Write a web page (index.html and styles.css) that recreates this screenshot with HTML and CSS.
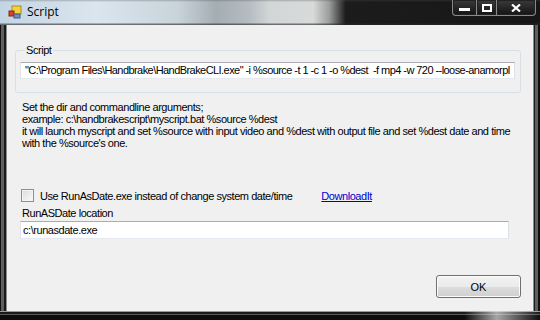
FILE: index.html
```html
<!DOCTYPE html>
<html>
<head>
<meta charset="utf-8">
<link rel="stylesheet" href="styles.css">
</head>
<body>
<div class="window">
  <div class="titlebar">
    <svg class="appicon" width="14" height="14" viewBox="0 0 14 14">
      <rect x="4" y="1" width="9" height="8" fill="#f4d23c" stroke="#b08a1a" stroke-width="1"/>
      <rect x="1" y="6" width="5" height="5" fill="#d9412b" stroke="#8a2415" stroke-width="1"/>
      <rect x="6" y="9" width="6" height="4" fill="#6f8fc4" stroke="#3e5a8a" stroke-width="1"/>
    </svg>
    <span class="title">Script</span>
    <div class="caption-buttons">
      <div class="cbtn min"><svg width="11" height="4" viewBox="0 0 11 4"><rect x="0" y="0" width="11" height="3" fill="#fff"/></svg></div>
      <div class="cbtn max"><svg width="10" height="8" viewBox="0 0 10 8"><rect x="1" y="1" width="8" height="6" fill="none" stroke="#fff" stroke-width="2"/></svg></div>
      <div class="cbtn close"><svg width="10" height="8" viewBox="0 0 10 8"><path d="M1 0.5 L9 7.5 M9 0.5 L1 7.5" stroke="#fff" stroke-width="2.2"/></svg></div>
    </div>
  </div>
  <div class="middle">
    <div class="frame-left"></div>
    <div class="client">
      <fieldset class="group">
        <legend>Script</legend>
        <div class="textbox cmd">"C:\Program Files\Handbrake\HandBrakeCLI.exe" -i %source -t 1 -c 1 -o %dest&nbsp; -f mp4 -w 720 --loose-anamorpl</div>
      </fieldset>
      <div class="desc">
        <div>Set the dir and commandline arguments;</div>
        <div>example: c:\handbrakescript\myscript.bat %source %dest</div>
        <div>it will launch myscript and set %source with input video and %dest with output file and set %dest date and time</div>
        <div>with the %source's one.</div>
      </div>
      <div class="checkrow">
        <span class="checkbox"></span>
        <span class="checklabel">Use RunAsDate.exe instead of change system date/time</span>
        <span class="link">DownloadIt</span>
      </div>
      <div class="label">RunASDate location</div>
      <div class="textbox small">c:\runasdate.exe</div>
      <div class="buttonrow">
        <div class="okbtn">OK</div>
      </div>
    </div>
    <div class="frame-right"></div>
  </div>
  <div class="frame-bottom"></div>
</div>
</body>
</html>
```
FILE: styles.css
```css
html, body {
  margin: 0;
  padding: 0;
}
body {
  width: 540px;
  height: 320px;
  overflow: hidden;
  background: #111;
  font-family: "Liberation Sans", Arial, sans-serif;
  font-size: 11px;
  letter-spacing: -0.45px;
  color: #000;
}
.window {
  width: 540px;
  height: 320px;
  display: flex;
  flex-direction: column;
}
.titlebar {
  height: 25px;
  flex: none;
  display: flex;
  align-items: flex-start;
  background:
    linear-gradient(180deg, rgba(80,80,80,0.35) 0, rgba(255,255,255,0) 2px, rgba(255,255,255,0) 23px, rgba(40,40,40,0.6) 24px),
    linear-gradient(90deg, #c3d5e4 0, #dbe5ee 18%, #c9d3da 33%, #a4adb3 40%, #b4bcc1 46%, #d3d6d7 50%, #d8dada 58%, #9a9c9c 61%, #1c1c1c 64%, #161616 100%);
}
.appicon {
  margin: 5px 0 0 8px;
  flex: none;
}
.title {
  margin: 4px 0 0 5px;
  font-family: "Open Sans", "Noto Sans", sans-serif;
  font-size: 12px;
  letter-spacing: 0;
  line-height: 16px;
  color: #000;
}
.caption-buttons {
  margin-left: auto;
  margin-right: 4px;
  display: flex;
}
.cbtn {
  height: 15px;
  display: flex;
  align-items: center;
  justify-content: center;
  border: 1px solid #8a8a8a;
  border-top: none;
  background: linear-gradient(180deg, #3a3a3a, #141414);
  box-shadow: inset 0 0 0 1px #222;
}
.cbtn.min { width: 23px; border-radius: 0 0 0 4px; border-right: none; }
.cbtn.min svg { margin-top: 5px; }
.cbtn.max { width: 19px; border-right: none; }
.cbtn.close { width: 38px; border-radius: 0 0 4px 0; }
.middle {
  flex: 1;
  display: flex;
  min-height: 0;
}
.frame-left {
  width: 7px;
  flex: none;
  background: linear-gradient(90deg, #101010 0 1px, #5f5f5f 1px 4px, #1a1a1a 4px 6px, #8d8d8d 6px 7px);
}
.frame-right {
  width: 7px;
  flex: none;
  background: linear-gradient(90deg, #8d8d8d 0 1px, #1a1a1a 1px 2px, #5f5f5f 2px 5px, #101010 5px 7px);
}
.frame-bottom {
  height: 9px;
  flex: none;
  background:
    linear-gradient(90deg, rgba(0,0,0,0) 0, rgba(0,0,0,0) 86%, rgba(230,230,230,0.7) 92%, rgba(0,0,0,0) 100%),
    linear-gradient(180deg, #9a9a9a 0 1px, #1a1a1a 1px 3px, #5a5a5a 3px 4px, #0d0d0d 4px 9px);
}
.client {
  flex: 1;
  min-width: 0;
  overflow: hidden;
  background: #f0f0f0;
  padding: 19px 12px 0 8px;
  display: flex;
  flex-direction: column;
}
.group {
  margin: 0;
  padding: 5px 5px 13px 4px;
  border: 1px solid #d5dfe5;
  border-radius: 3px;
  min-width: 0;
}
.group legend {
  margin-left: 5px;
  padding: 0 2px 0 1px;
  line-height: 13px;
  font-size: 11px;
}
.textbox {
  height: 15px;
  line-height: 15px;
  background: #fff;
  border: 1px solid #e3e9ef;
  border-top-color: #abadb3;
  border-left-color: #e2e3ea;
  border-right-color: #dbdfe6;
  padding: 0 3px;
  white-space: nowrap;
  overflow: hidden;
}
.textbox.cmd {
  padding-left: 4px;
  letter-spacing: -0.56px;
}
.textbox.small {
  margin-top: 1px;
  height: 16px;
  line-height: 17px;
  width: 483px;
  margin-left: 5px;
  padding: 0 2px;
}
.desc {
  margin-top: 8px;
  margin-left: 7px;
  line-height: 12px;
  white-space: nowrap;
}
.checkrow {
  margin-top: 40px;
  margin-left: 6px;
  display: flex;
  align-items: center;
  height: 13px;
  white-space: nowrap;
}
.checkbox {
  width: 11px;
  height: 11px;
  border: 1px solid #8e8f8f;
  background: linear-gradient(135deg, #dcdcdc, #fbfbfb);
  box-shadow: inset 0 0 0 1px #f4f4f4;
  flex: none;
}
.checklabel {
  margin-left: 6px;
}
.link {
  margin-left: 29px;
  color: #0000cc;
  text-decoration: underline;
}
.label {
  margin-top: 5px;
  margin-left: 7px;
  line-height: 13px;
}
.buttonrow {
  margin-top: 36px;
  display: flex;
  justify-content: flex-end;
}
.okbtn {
  width: 83px;
  height: 21px;
  border: 1px solid #707070;
  border-radius: 3px;
  background: linear-gradient(180deg, #f2f2f2 0, #ebebeb 50%, #dddddd 50%, #cfcfcf 100%);
  box-shadow: inset 0 0 0 1px #fcfcfc;
  display: flex;
  align-items: center;
  justify-content: center;
  font-size: 11px;
  letter-spacing: 0;
}
```
